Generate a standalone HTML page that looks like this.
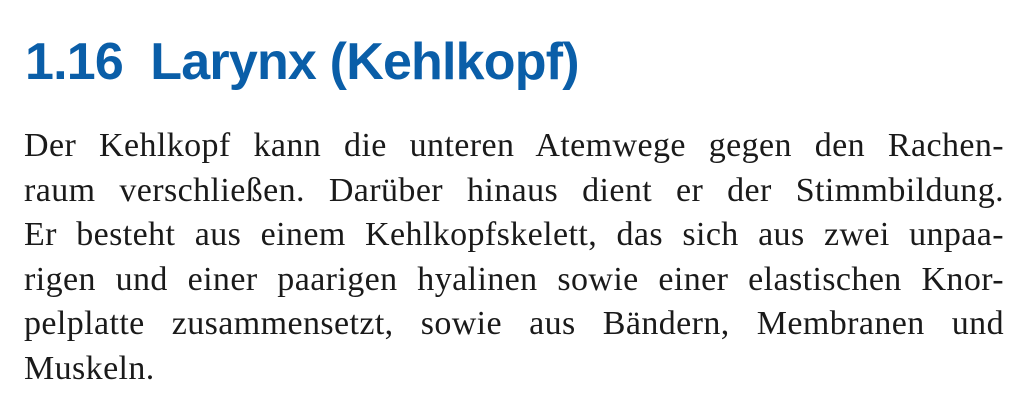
<!DOCTYPE html>
<html><head><meta charset="utf-8"><style>
html,body{margin:0;padding:0;background:#fff;width:1024px;height:419px;overflow:hidden}
h1{position:absolute;left:25px;top:30px;margin:0;font:bold 52px/64px "Liberation Sans",sans-serif;color:#0a5ea8;white-space:nowrap;letter-spacing:-0.8px}
.b{position:absolute;left:24px;width:980px;top:124px;font:34px/44.5px "Liberation Serif",serif;color:#1a1a1a;letter-spacing:0.4px}
.l{text-align:justify;text-align-last:justify;white-space:nowrap;height:44.5px}
.l.last{text-align-last:left}
</style></head><body>
<h1>1.16&nbsp; Larynx (Kehlkopf)</h1>
<div class="b">
<div class="l">Der Kehlkopf kann die unteren Atemwege gegen den Rachen-</div>
<div class="l">raum verschließen. Darüber hinaus dient er der Stimmbildung.</div>
<div class="l">Er besteht aus einem Kehlkopfskelett, das sich aus zwei unpaa-</div>
<div class="l">rigen und einer paarigen hyalinen sowie einer elastischen Knor-</div>
<div class="l">pelplatte zusammensetzt, sowie aus Bändern, Membranen und</div>
<div class="l last">Muskeln.</div>
</div>
</body></html>
